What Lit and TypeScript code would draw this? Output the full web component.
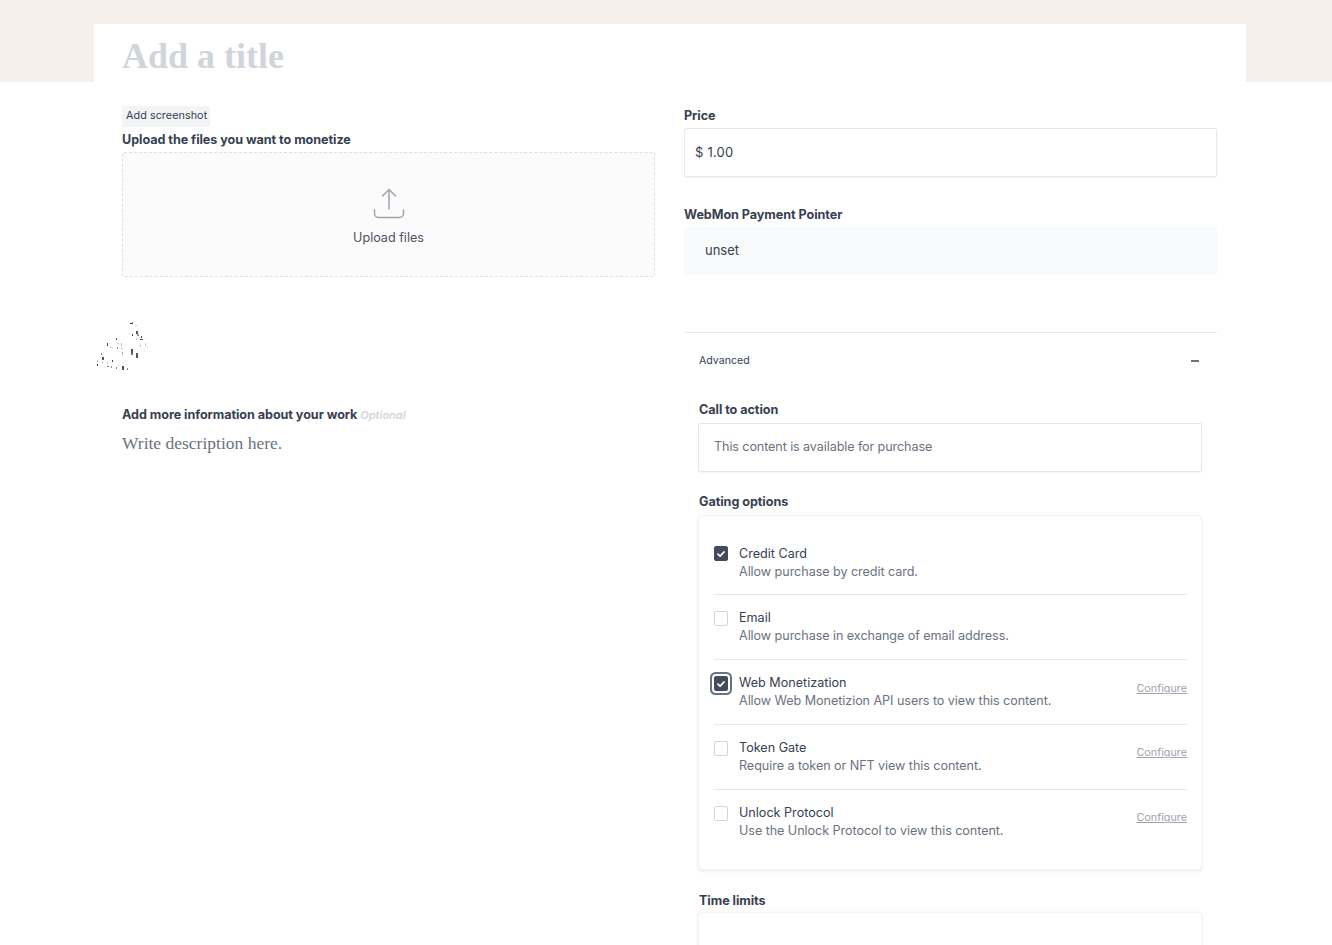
import { LitElement, html, css, svg } from "lit";
import { customElement } from "lit/decorators.js";

const speckles: [number, number, number, number, string][] = [
  [130, 323, 3, 1, "#333"], [132, 322, 1, 2, "#777"], [136, 325, 1, 1, "#ccc"],
  [136, 331, 2, 3, "#555"], [137, 334, 2, 2, "#999"], [132, 334, 1, 2, "#444"], [141, 336, 1, 2, "#444"],
  [140, 339, 3, 1, "#444"], [136, 338, 1, 2, "#ccc"], [145, 343, 1, 3, "#ccc"], [147, 346, 1, 2, "#ddd"],
  [140, 345, 1, 2, "#bbb"], [116, 338, 1, 2, "#555"], [107, 343, 1, 3, "#444"], [110, 347, 3, 1, "#ccc"],
  [117, 343, 2, 1, "#ccc"], [121, 343, 1, 3, "#bbb"], [121, 348, 2, 1, "#ccc"], [117, 347, 1, 2, "#888"],
  [131, 349, 2, 4, "#555"], [131, 353, 2, 2, "#777"], [136, 353, 2, 5, "#555"], [122, 352, 1, 3, "#aaa"],
  [101, 353, 1, 2, "#888"], [102, 357, 2, 3, "#555"], [97, 360, 1, 2, "#bbb"], [97, 364, 1, 2, "#333"],
  [102, 362, 1, 1, "#999"], [112, 360, 1, 2, "#444"], [107, 362, 1, 2, "#ccc"], [107, 366, 2, 1, "#777"],
  [111, 366, 1, 2, "#999"], [116, 367, 1, 2, "#888"], [122, 366, 2, 4, "#555"], [127, 368, 1, 2, "#888"],
  [123, 362, 1, 1, "#ccc"], [118, 365, 1, 1, "#ccc"], [144, 350, 1, 1, "#ddd"],
];

const options = [
  { t: "Credit Card", d: "Allow purchase by credit card.", on: true },
  { t: "Email", d: "Allow purchase in exchange of email address." },
  { t: "Web Monetization", d: "Allow Web Monetizion API users to view this content.", on: true, focus: true, cfg: true },
  { t: "Token Gate", d: "Require a token or NFT view this content.", cfg: true },
  { t: "Unlock Protocol", d: "Use the Unlock Protocol to view this content.", cfg: true },
];

@customElement("app-root")
export class AppRoot extends LitElement {
  static styles = css`
    :host { display: block; height: 945px; overflow: hidden; background: #fff; font-family: Inter, "Liberation Sans", sans-serif; color: #374151; position: relative; }
    .banner { height: 82px; background: #f7efea; }
    .page { width: 1152px; margin: -58px 0 0 94px; background: #fff; padding: 0 29px 0 28px; box-sizing: border-box; }
    .title { height: 58px; display: flex; align-items: center; font-family: "Liberation Serif", Georgia, serif; font-weight: 700; font-size: 36px; color: #d1d5db; padding-top: 5px; box-sizing: border-box; }
    .cols { display: grid; grid-template-columns: 533px 533px; column-gap: 29px; padding-top: 24px; }
    .shot { width: fit-content; height: 21px; line-height: 19px; padding: 0 3px 0 4px; margin-bottom: 4px; background: #f3f4f6; border-radius: 2px; font-size: 10.8px; letter-spacing: .05px; color: #374151; }
    .label { font-size: 12.6px; font-weight: 700; line-height: 16px; padding-top: 1px; margin-bottom: -1px; color: #374151; letter-spacing: -.05px; }
    .drop { height: 125px; margin-top: 5px; border: 1px dashed #e0e0e0; background: #fbfbfb; box-sizing: border-box; border-radius: 2px; display: flex; flex-direction: column; align-items: center; padding-top: 34px; }
    .drop svg { display: block; }
    .drop span { font-size: 12.6px; line-height: 16px; margin-top: 9px; color: #4b5563; }
    .speck { position: absolute; left: 0; top: 0; pointer-events: none; }
    .more { margin-top: 129px; }
    .more em { font-size: 11px; font-weight: 600; color: #d1d5db; letter-spacing: 0; }
    .desc { margin-top: 10px; font-family: "Liberation Serif", Georgia, serif; font-size: 17.5px; line-height: 22px; color: #6b7280; }
    .right { margin-top: 1px; }
    .input { height: 49px; border: 1px solid #e5e7eb; box-shadow: 0 1px 2px rgba(0,0,0,.05); box-sizing: border-box; border-radius: 2px; display: flex; align-items: center; font-size: 13px; background: #fff; padding-bottom: 2px; }
    .price { margin-top: 5px; padding-left: 10px; color: #374151; letter-spacing: .2px; }
    .wm-label { margin-top: 29px; }
    .pointer { margin-top: 5px; height: 48px; box-sizing: border-box; padding-bottom: 2px; background: #f9fafb; display: flex; align-items: center; padding-left: 21px; font-size: 13px; color: #374151; }
    .adv { margin-top: 57px; border-top: 1px solid #e5e7eb; padding: 0 15px; }
    .adv-head { height: 54px; display: flex; align-items: center; justify-content: space-between; font-size: 10.6px; color: #374151; }
    .minus { width: 8px; height: 2px; background: #6b7280; margin-right: 3px; margin-top: 2px; }
    .label.cta { margin-top: 14px; }
    .cta-input { margin: 6px 0 0 -1px; padding-left: 15px; color: #6b7280; font-size: 12.6px; letter-spacing: -.1px; }
    .gating { margin-top: 21px; }
    .card { margin: 6px 0 0 -1px; border: 1px solid #f3f4f6; border-radius: 4px; box-shadow: 0 1px 3px rgba(0,0,0,.1); padding: 14px 14px 0 15px; background: #fff; }
    .opt { display: flex; align-items: flex-start; height: 65px; box-sizing: border-box; padding-top: 14px; border-bottom: 1px solid #e5e7eb; }
    .opt:first-child { padding-top: 15px; }
    .opt:first-child .box { margin-top: 1px; }
    .opt:last-child { border-bottom: 0; height: 79px; }
    .opt:nth-child(3) .cfg { margin-top: 8px; }
    .box { width: 14px; height: 15px; box-sizing: border-box; border: 1px solid #d1d5db; border-radius: 2px; margin-top: 2px; margin-right: 11px; flex: none; display: flex; align-items: center; justify-content: center; }
    .box.on { background: #434b5d; border-color: #434b5d; }
    .box.focus { box-shadow: 0 0 0 2px #fff, 0 0 0 4px #6b7280; }
    .text { flex: 1; font-size: 12.6px; line-height: 18px; }
    .text b { display: block; font-weight: 400; color: #374151; }
    .text span { display: block; color: #6b7280; letter-spacing: -.06px; }
    .cfg { font-size: 10.8px; color: #9ca3af; text-decoration: underline; margin-top: 7px; }
    .time { margin-top: 22px; }
    .card.tl { height: 60px; margin-top: 4px; padding: 0; }
  `;

  render() {
    return html`
      <div class="banner"></div>
      <div class="page">
        <div class="title">Add a title</div>
        <div class="cols">
          <div class="left">
            <div class="shot">Add screenshot</div>
            <div class="label">Upload the files you want to monetize</div>
            <div class="drop">
              <svg width="32" height="34" viewBox="0 0 32 34" fill="none" stroke="#9ca3af" stroke-width="1.5" stroke-linecap="round" stroke-linejoin="round">
                <path d="M16 22V2.5M9.5 9L16 2.5 22.5 9M1.5 23v3.5a4 4 0 0 0 4 4h21a4 4 0 0 0 4-4V23" />
              </svg>
              <span>Upload files</span>
            </div>
            <div class="more label">Add more information about your work <em>Optional</em></div>
            <div class="desc">Write description here.</div>
          </div>
          <div class="right">
            <div class="label">Price</div>
            <div class="input price">$ 1.00</div>
            <div class="label wm-label">WebMon Payment Pointer</div>
            <div class="pointer">unset</div>
            <div class="adv">
              <div class="adv-head"><span>Advanced</span><i class="minus"></i></div>
              <div class="label cta">Call to action</div>
              <div class="input cta-input">This content is available for purchase</div>
              <div class="label gating">Gating options</div>
              <div class="card">
                ${options.map(o => html`
                  <div class="opt">
                    <div class="box ${o.on ? "on" : ""} ${o.focus ? "focus" : ""}">
                      ${o.on ? html`<svg width="10" height="10" viewBox="0 0 10 10" fill="none" stroke="#fff" stroke-width="1.8" stroke-linecap="round" stroke-linejoin="round"><path d="M2 5.2l2.1 2L8 3"/></svg>` : ""}
                    </div>
                    <div class="text"><b>${o.t}</b><span>${o.d}</span></div>
                    ${o.cfg ? html`<a class="cfg">Configure</a>` : ""}
                  </div>`)}
              </div>
              <div class="label time">Time limits</div>
              <div class="card tl"></div>
            </div>
          </div>
        </div>
      </div>
      <svg class="speck" width="160" height="380">
        ${speckles.map(([x, y, w, h, c]) => svg`<rect x=${x} y=${y} width=${w} height=${h} fill=${c} />`)}
      </svg>
    `;
  }
}
